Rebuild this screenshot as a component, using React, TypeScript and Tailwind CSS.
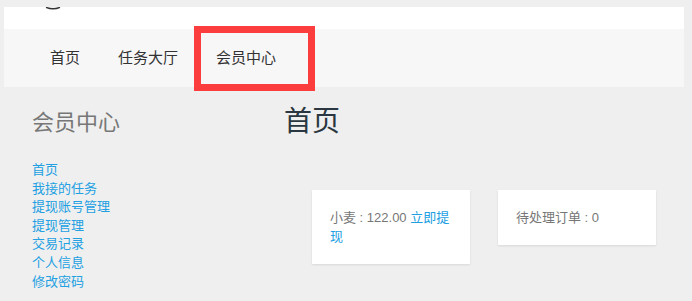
import React from "react";

const font = "font-['Liberation_Sans','Noto_Sans_CJK_SC',sans-serif]";

export default function App() {
  const links = ["首页", "我接的任务", "提现账号管理", "提现管理", "交易记录", "个人信息", "修改密码"];
  return (
    <div className={`relative w-[692px] h-[301px] overflow-hidden bg-[#efefef] ${font}`}>
      <div className="pt-[7px] pl-[4px] w-[684px]">
        <div className="relative h-[22px] bg-white">
          <svg className="absolute left-[41px] top-0" width="16" height="3" viewBox="0 0 16 3">
            <path d="M1 0.3 Q8 3.2 15 0.3" fill="none" stroke="#333" strokeWidth="1.4" />
          </svg>
        </div>
        <div className="flex h-[58px] items-center bg-[#f7f7f7] pl-[27px] text-[15px] text-[#333]">
          <span className="px-[19px]">首页</span>
          <span className="px-[19px]">任务大厅</span>
          <span className="px-[19px]">会员中心</span>
        </div>
        <div className="flex overflow-hidden">
          <div className="ml-[28px] w-[252px] shrink-0 pt-[24px]">
            <div className="text-[22px] leading-[24px] text-[#777]">会员中心</div>
            <ul className="mt-[26px] text-[13px] leading-[18.6px] text-[#22a0e2]">
              {links.map((l) => (
                <li key={l}>{l}</li>
              ))}
            </ul>
          </div>
          <div className="flex-1 pt-[19px]">
            <h1 className="text-[28px] leading-[31px] text-[#2b3740]">首页</h1>
            <div className="mt-[53px] ml-[28px] flex items-start gap-[28px] text-[13px] leading-[19px] text-[#777]">
              <div className="w-[158px] shrink-0 bg-white p-[18px] shadow-[0_1px_2px_rgba(0,0,0,0.1)]">
                小麦 : 122.00 <span className="text-[#22a0e2]">立即提<br />现</span>
              </div>
              <div className="w-[158px] shrink-0 bg-white p-[18px] shadow-[0_1px_2px_rgba(0,0,0,0.1)]">
                待处理订单 : 0
              </div>
              <div className="h-[55px] w-[158px] shrink-0 bg-[#f3f3f3]" />
            </div>
          </div>
        </div>
      </div>
      <div className="absolute left-[194px] top-[26px] h-[65px] w-[121px] border-[7px] border-[#fc3d3d]" />
    </div>
  );
}
